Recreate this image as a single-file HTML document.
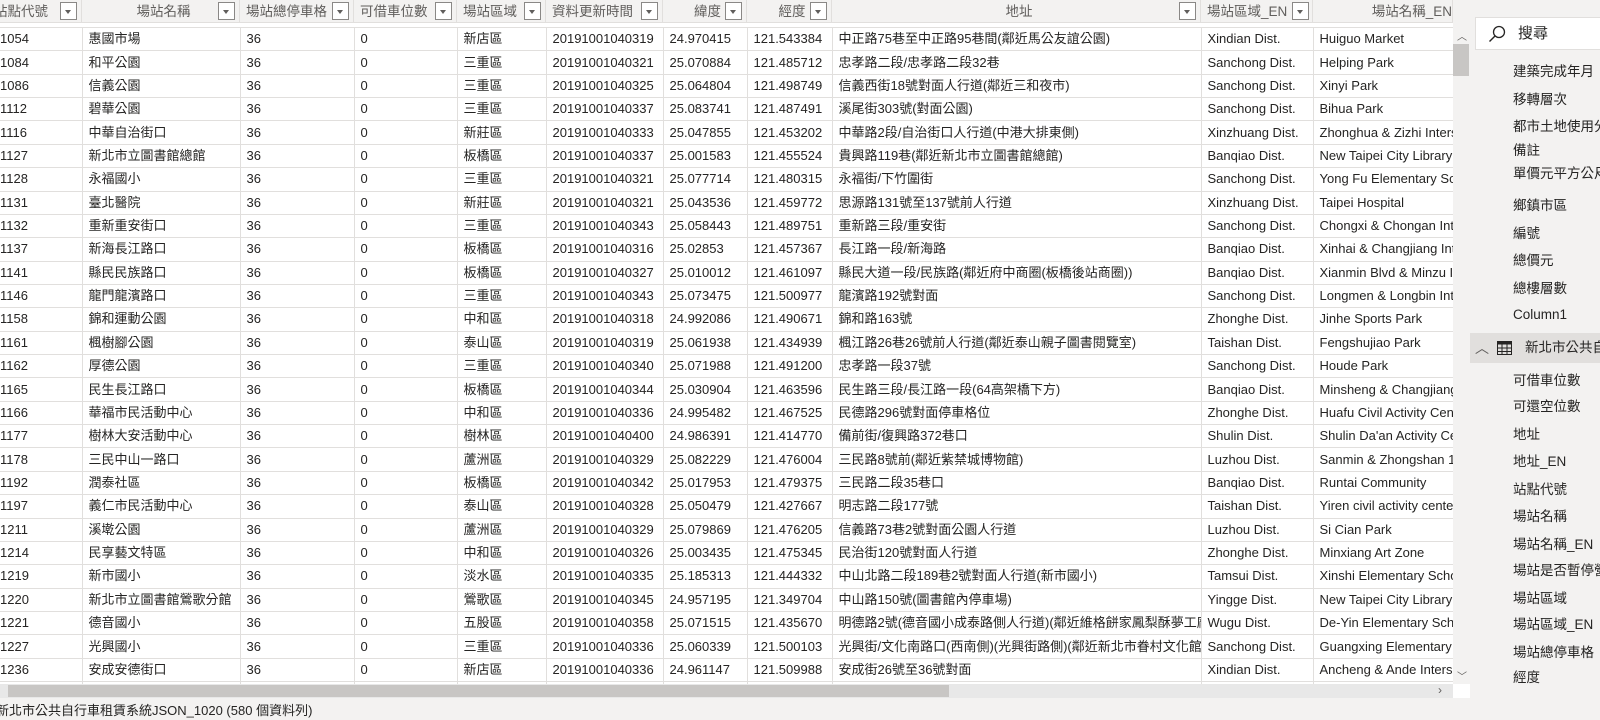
<!DOCTYPE html>
<html><head><meta charset="utf-8"><style>
*{margin:0;padding:0;box-sizing:border-box}
body{width:1600px;height:719px;overflow:hidden;background:#f3f2f1;font-family:"Liberation Sans","Noto Sans CJK TC",sans-serif;font-size:13px;color:#252423;position:relative}
#grid{position:absolute;left:0;top:0;width:1453px;height:684px;background:#fff;overflow:hidden}
.hdr{position:absolute;top:0;left:0;height:23px;width:1453px;background:#f3f2f1;border-bottom:1px solid #e1dfdd}
.h{position:absolute;top:0;height:23px;border-right:1px solid #e1dfdd;line-height:23px;font-size:13.5px;color:#605e5c;overflow:hidden;white-space:nowrap}
.h span{padding-left:6px}
.dd{position:absolute;top:2px;width:17px;height:18px;border:1px solid #8a8886;background:#fff}
.dd:after{content:"";position:absolute;left:4px;top:7px;border:3px solid transparent;border-top:4px solid #605e5c}
table{position:absolute;top:27px;left:0;border-collapse:collapse;table-layout:fixed;width:1453px;border-top:1px solid #e1dfdd}
td{height:23.37px;border-right:1px solid #e1dfdd;border-bottom:1px solid #e1dfdd;padding-left:6px;white-space:nowrap;overflow:hidden;line-height:22px}
#vs{position:absolute;left:1453px;top:23px;width:17px;height:661px;background:#f3f2f1}
#vs .th{position:absolute;left:0;top:21px;width:16px;height:32px;background:#c8c6c4}
#hs{position:absolute;left:0;top:684px;width:1453px;height:14px;background:#e8e8e8}
#hs .th{position:absolute;left:8px;top:1px;width:941px;height:12px;background:#c8c6c4}
#status{position:absolute;top:702px;font-size:13px;color:#252423;line-height:18px;left:-4px}
#panel{position:absolute;left:1470px;top:0;width:130px;height:719px;background:#f3f2f1}
#search{position:absolute;left:5px;top:17px;width:160px;height:33px;background:#fff;border:1px solid #e1dfdd;font-size:15px;line-height:31px;padding-left:42px}
.it{position:absolute;left:43px;font-size:13.5px;color:#252423;white-space:nowrap;line-height:18px}
#tbl{position:absolute;left:0;top:333px;width:140px;height:30px;background:#e1dfdd;font-size:13.5px;line-height:30px;padding-left:55px;white-space:nowrap;overflow:hidden}
</style></head><body>
<div id="grid">
<div class="hdr">
<div class="h" style="left:0;width:82px"><span style="padding-left:0;margin-left:-6px">站點代號</span><div class="dd" style="left:60px"></div></div>
<div class="h" style="left:82px;width:158px;text-align:center"><span>場站名稱</span><div class="dd" style="left:136px"></div></div>
<div class="h" style="left:240px;width:114px"><span>場站總停車格</span><div class="dd" style="left:92px"></div></div>
<div class="h" style="left:354px;width:103px"><span>可借車位數</span><div class="dd" style="left:81px"></div></div>
<div class="h" style="left:457px;width:89px"><span>場站區域</span><div class="dd" style="left:67px"></div></div>
<div class="h" style="left:546px;width:117px"><span>資料更新時間</span><div class="dd" style="left:95px"></div></div>
<div class="h" style="left:663px;width:84px;text-align:center"><span>緯度</span><div class="dd" style="left:62px"></div></div>
<div class="h" style="left:747px;width:85px;text-align:center"><span>經度</span><div class="dd" style="left:63px"></div></div>
<div class="h" style="left:832px;width:369px;text-align:center"><span>地址</span><div class="dd" style="left:347px"></div></div>
<div class="h" style="left:1201px;width:112px"><span>場站區域_EN</span><div class="dd" style="left:91px"></div></div>
<div class="h" style="left:1313px;width:140px;text-align:right"><span>場站名稱_EN</span></div>
</div>
<table>
<colgroup><col style="width:82px"><col style="width:158px"><col style="width:114px"><col style="width:103px"><col style="width:89px"><col style="width:117px"><col style="width:84px"><col style="width:85px"><col style="width:369px"><col style="width:112px"><col style="width:140px"></colgroup>
<tr><td style="padding-left:0">1054</td><td>惠國市場</td><td>36</td><td>0</td><td>新店區</td><td>20191001040319</td><td>24.970415</td><td>121.543384</td><td>中正路75巷至中正路95巷間(鄰近馬公友誼公園)</td><td>Xindian Dist.</td><td>Huiguo Market</td></tr>
<tr><td style="padding-left:0">1084</td><td>和平公園</td><td>36</td><td>0</td><td>三重區</td><td>20191001040321</td><td>25.070884</td><td>121.485712</td><td>忠孝路二段/忠孝路二段32巷</td><td>Sanchong Dist.</td><td>Helping Park</td></tr>
<tr><td style="padding-left:0">1086</td><td>信義公園</td><td>36</td><td>0</td><td>三重區</td><td>20191001040325</td><td>25.064804</td><td>121.498749</td><td>信義西街18號對面人行道(鄰近三和夜市)</td><td>Sanchong Dist.</td><td>Xinyi Park</td></tr>
<tr><td style="padding-left:0">1112</td><td>碧華公園</td><td>36</td><td>0</td><td>三重區</td><td>20191001040337</td><td>25.083741</td><td>121.487491</td><td>溪尾街303號(對面公園)</td><td>Sanchong Dist.</td><td>Bihua Park</td></tr>
<tr><td style="padding-left:0">1116</td><td>中華自治街口</td><td>36</td><td>0</td><td>新莊區</td><td>20191001040333</td><td>25.047855</td><td>121.453202</td><td>中華路2段/自治街口人行道(中港大排東側)</td><td>Xinzhuang Dist.</td><td>Zhonghua &amp; Zizhi Intersection</td></tr>
<tr><td style="padding-left:0">1127</td><td>新北市立圖書館總館</td><td>36</td><td>0</td><td>板橋區</td><td>20191001040337</td><td>25.001583</td><td>121.455524</td><td>貴興路119巷(鄰近新北市立圖書館總館)</td><td>Banqiao Dist.</td><td>New Taipei City Library</td></tr>
<tr><td style="padding-left:0">1128</td><td>永福國小</td><td>36</td><td>0</td><td>三重區</td><td>20191001040321</td><td>25.077714</td><td>121.480315</td><td>永福街/下竹圍街</td><td>Sanchong Dist.</td><td>Yong Fu Elementary School</td></tr>
<tr><td style="padding-left:0">1131</td><td>臺北醫院</td><td>36</td><td>0</td><td>新莊區</td><td>20191001040321</td><td>25.043536</td><td>121.459772</td><td>思源路131號至137號前人行道</td><td>Xinzhuang Dist.</td><td>Taipei Hospital</td></tr>
<tr><td style="padding-left:0">1132</td><td>重新重安街口</td><td>36</td><td>0</td><td>三重區</td><td>20191001040343</td><td>25.058443</td><td>121.489751</td><td>重新路三段/重安街</td><td>Sanchong Dist.</td><td>Chongxi &amp; Chongan Intersection</td></tr>
<tr><td style="padding-left:0">1137</td><td>新海長江路口</td><td>36</td><td>0</td><td>板橋區</td><td>20191001040316</td><td>25.02853</td><td>121.457367</td><td>長江路一段/新海路</td><td>Banqiao Dist.</td><td>Xinhai &amp; Changjiang Intersection</td></tr>
<tr><td style="padding-left:0">1141</td><td>縣民民族路口</td><td>36</td><td>0</td><td>板橋區</td><td>20191001040327</td><td>25.010012</td><td>121.461097</td><td>縣民大道一段/民族路(鄰近府中商圈(板橋後站商圈))</td><td>Banqiao Dist.</td><td>Xianmin Blvd &amp; Minzu Intersection</td></tr>
<tr><td style="padding-left:0">1146</td><td>龍門龍濱路口</td><td>36</td><td>0</td><td>三重區</td><td>20191001040343</td><td>25.073475</td><td>121.500977</td><td>龍濱路192號對面</td><td>Sanchong Dist.</td><td>Longmen &amp; Longbin Intersection</td></tr>
<tr><td style="padding-left:0">1158</td><td>錦和運動公園</td><td>36</td><td>0</td><td>中和區</td><td>20191001040318</td><td>24.992086</td><td>121.490671</td><td>錦和路163號</td><td>Zhonghe Dist.</td><td>Jinhe Sports Park</td></tr>
<tr><td style="padding-left:0">1161</td><td>楓樹腳公園</td><td>36</td><td>0</td><td>泰山區</td><td>20191001040319</td><td>25.061938</td><td>121.434939</td><td>楓江路26巷26號前人行道(鄰近泰山親子圖書閱覽室)</td><td>Taishan Dist.</td><td>Fengshujiao Park</td></tr>
<tr><td style="padding-left:0">1162</td><td>厚德公園</td><td>36</td><td>0</td><td>三重區</td><td>20191001040340</td><td>25.071988</td><td>121.491200</td><td>忠孝路一段37號</td><td>Sanchong Dist.</td><td>Houde Park</td></tr>
<tr><td style="padding-left:0">1165</td><td>民生長江路口</td><td>36</td><td>0</td><td>板橋區</td><td>20191001040344</td><td>25.030904</td><td>121.463596</td><td>民生路三段/長江路一段(64高架橋下方)</td><td>Banqiao Dist.</td><td>Minsheng &amp; Changjiang Intersection</td></tr>
<tr><td style="padding-left:0">1166</td><td>華福市民活動中心</td><td>36</td><td>0</td><td>中和區</td><td>20191001040336</td><td>24.995482</td><td>121.467525</td><td>民德路296號對面停車格位</td><td>Zhonghe Dist.</td><td>Huafu Civil Activity Center</td></tr>
<tr><td style="padding-left:0">1177</td><td>樹林大安活動中心</td><td>36</td><td>0</td><td>樹林區</td><td>20191001040400</td><td>24.986391</td><td>121.414770</td><td>備前街/復興路372巷口</td><td>Shulin Dist.</td><td>Shulin Da'an Activity Center</td></tr>
<tr><td style="padding-left:0">1178</td><td>三民中山一路口</td><td>36</td><td>0</td><td>蘆洲區</td><td>20191001040329</td><td>25.082229</td><td>121.476004</td><td>三民路8號前(鄰近紫禁城博物館)</td><td>Luzhou Dist.</td><td>Sanmin &amp; Zhongshan 1st Rd.</td></tr>
<tr><td style="padding-left:0">1192</td><td>潤泰社區</td><td>36</td><td>0</td><td>板橋區</td><td>20191001040342</td><td>25.017953</td><td>121.479375</td><td>三民路二段35巷口</td><td>Banqiao Dist.</td><td>Runtai Community</td></tr>
<tr><td style="padding-left:0">1197</td><td>義仁市民活動中心</td><td>36</td><td>0</td><td>泰山區</td><td>20191001040328</td><td>25.050479</td><td>121.427667</td><td>明志路二段177號</td><td>Taishan Dist.</td><td>Yiren civil activity center</td></tr>
<tr><td style="padding-left:0">1211</td><td>溪墘公園</td><td>36</td><td>0</td><td>蘆洲區</td><td>20191001040329</td><td>25.079869</td><td>121.476205</td><td>信義路73巷2號對面公園人行道</td><td>Luzhou Dist.</td><td>Si Cian Park</td></tr>
<tr><td style="padding-left:0">1214</td><td>民享藝文特區</td><td>36</td><td>0</td><td>中和區</td><td>20191001040326</td><td>25.003435</td><td>121.475345</td><td>民治街120號對面人行道</td><td>Zhonghe Dist.</td><td>Minxiang Art Zone</td></tr>
<tr><td style="padding-left:0">1219</td><td>新市國小</td><td>36</td><td>0</td><td>淡水區</td><td>20191001040335</td><td>25.185313</td><td>121.444332</td><td>中山北路二段189巷2號對面人行道(新市國小)</td><td>Tamsui Dist.</td><td>Xinshi Elementary School</td></tr>
<tr><td style="padding-left:0">1220</td><td>新北市立圖書館鶯歌分館</td><td>36</td><td>0</td><td>鶯歌區</td><td>20191001040345</td><td>24.957195</td><td>121.349704</td><td>中山路150號(圖書館內停車場)</td><td>Yingge Dist.</td><td>New Taipei City Library Yingge</td></tr>
<tr><td style="padding-left:0">1221</td><td>德音國小</td><td>36</td><td>0</td><td>五股區</td><td>20191001040358</td><td>25.071515</td><td>121.435670</td><td>明德路2號(德音國小成泰路側人行道)(鄰近維格餅家鳳梨酥夢工廠)</td><td>Wugu Dist.</td><td>De-Yin Elementary School</td></tr>
<tr><td style="padding-left:0">1227</td><td>光興國小</td><td>36</td><td>0</td><td>三重區</td><td>20191001040336</td><td>25.060339</td><td>121.500103</td><td>光興街/文化南路口(西南側)(光興街路側)(鄰近新北市眷村文化館)</td><td>Sanchong Dist.</td><td>Guangxing Elementary School</td></tr>
<tr><td style="padding-left:0">1236</td><td>安成安德街口</td><td>36</td><td>0</td><td>新店區</td><td>20191001040336</td><td>24.961147</td><td>121.509988</td><td>安成街26號至36號對面</td><td>Xindian Dist.</td><td>Ancheng &amp; Ande Intersection</td></tr>
<tr><td></td><td></td><td></td><td></td><td></td><td></td><td></td><td></td><td></td><td></td><td></td></tr>
</table>
</div>
<div id="vs"><div style="position:absolute;left:4px;top:5px;font-size:10px;color:#605e5c">︿</div><div class="th"></div><div style="position:absolute;left:4px;top:645px;font-size:10px;color:#605e5c">﹀</div></div>
<div style="position:absolute;left:1453px;top:684px;width:17px;height:14px;background:#fff"></div>
<div id="hs"><div class="th"></div><div style="position:absolute;left:1438px;top:-1px;font-size:12px;color:#605e5c">›</div></div>
<div id="status">新北市公共自行車租賃系統JSON_1020 (580 個資料列)</div>
<div id="panel">
<div id="search"><svg style="position:absolute;left:12px;top:7px" width="18" height="18" viewBox="0 0 18 18"><circle cx="11" cy="7" r="5.5" fill="none" stroke="#252423" stroke-width="1.3"/><line x1="7" y1="11" x2="1.5" y2="16.5" stroke="#252423" stroke-width="1.4"/></svg>搜尋</div>
<div class="it" style="top:63px">建築完成年月</div>
<div class="it" style="top:91px">移轉層次</div>
<div class="it" style="top:118px">都市土地使用分區</div>
<div class="it" style="top:142px">備註</div>
<div class="it" style="top:165px">單價元平方公尺</div>
<div class="it" style="top:197px">鄉鎮市區</div>
<div class="it" style="top:225px">編號</div>
<div class="it" style="top:252px">總價元</div>
<div class="it" style="top:280px">總樓層數</div>
<div class="it" style="top:306px">Column1</div>
<div id="tbl"><span style="position:absolute;left:5px;top:0;font-size:14px;color:#605e5c">︿</span><svg style="position:absolute;left:27px;top:8px" width="15" height="14" viewBox="0 0 15 14"><rect x="0.5" y="0.5" width="14" height="13" fill="none" stroke="#252423"/><rect x="0.5" y="0.5" width="14" height="3" fill="#252423"/><line x1="5" y1="0" x2="5" y2="14" stroke="#252423"/><line x1="10" y1="0" x2="10" y2="14" stroke="#252423"/><line x1="0" y1="7" x2="15" y2="7" stroke="#252423"/><line x1="0" y1="10.5" x2="15" y2="10.5" stroke="#252423"/></svg>新北市公共自行車</div>
<div class="it" style="top:372px">可借車位數</div>
<div class="it" style="top:398px">可還空位數</div>
<div class="it" style="top:426px">地址</div>
<div class="it" style="top:453px">地址_EN</div>
<div class="it" style="top:481px">站點代號</div>
<div class="it" style="top:508px">場站名稱</div>
<div class="it" style="top:536px">場站名稱_EN</div>
<div class="it" style="top:562px">場站是否暫停營運</div>
<div class="it" style="top:590px">場站區域</div>
<div class="it" style="top:616px">場站區域_EN</div>
<div class="it" style="top:644px">場站總停車格</div>
<div class="it" style="top:669px">經度</div>
</div>
</body></html>
